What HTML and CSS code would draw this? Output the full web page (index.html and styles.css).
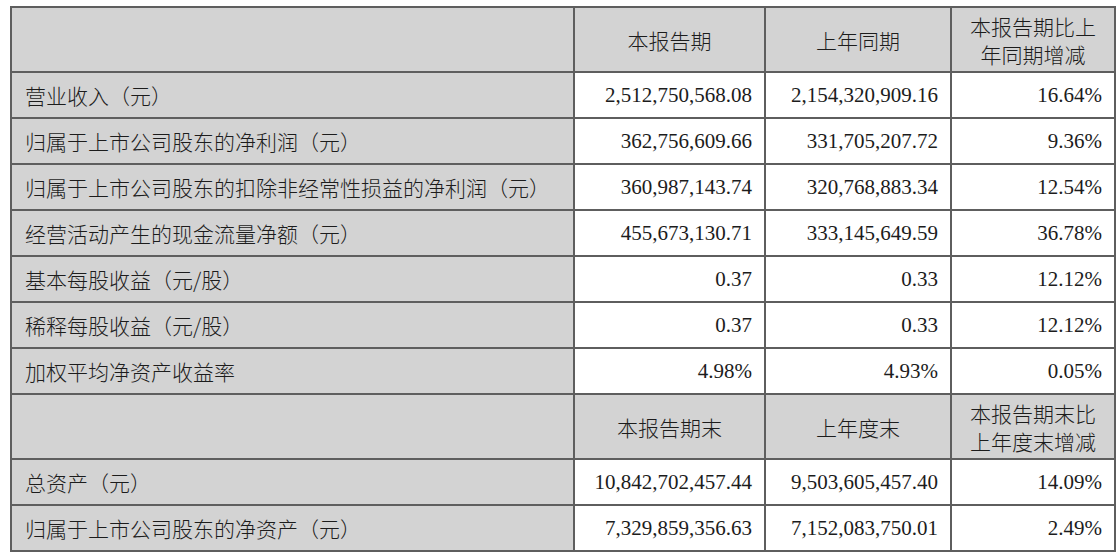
FILE: index.html
```html
<!DOCTYPE html>
<html lang="zh">
<head>
<meta charset="utf-8">
<link rel="stylesheet" href="styles.css">
</head>
<body>
<table class="fin">
  <colgroup>
    <col class="c1"><col class="c2"><col class="c3"><col class="c4">
  </colgroup>
  <tr class="head">
    <td class="label"></td>
    <td>本报告期</td>
    <td>上年同期</td>
    <td>本报告期比上<br>年同期增减</td>
  </tr>
  <tr><td class="label">营业收入（元）</td><td class="num">2,512,750,568.08</td><td class="num">2,154,320,909.16</td><td class="num">16.64%</td></tr>
  <tr><td class="label">归属于上市公司股东的净利润（元）</td><td class="num">362,756,609.66</td><td class="num">331,705,207.72</td><td class="num">9.36%</td></tr>
  <tr><td class="label">归属于上市公司股东的扣除非经常性损益的净利润（元）</td><td class="num">360,987,143.74</td><td class="num">320,768,883.34</td><td class="num">12.54%</td></tr>
  <tr><td class="label">经营活动产生的现金流量净额（元）</td><td class="num">455,673,130.71</td><td class="num">333,145,649.59</td><td class="num">36.78%</td></tr>
  <tr><td class="label">基本每股收益（元/股）</td><td class="num">0.37</td><td class="num">0.33</td><td class="num">12.12%</td></tr>
  <tr><td class="label">稀释每股收益（元/股）</td><td class="num">0.37</td><td class="num">0.33</td><td class="num">12.12%</td></tr>
  <tr><td class="label">加权平均净资产收益率</td><td class="num">4.98%</td><td class="num">4.93%</td><td class="num">0.05%</td></tr>
  <tr class="head">
    <td class="label"></td>
    <td>本报告期末</td>
    <td>上年度末</td>
    <td>本报告期末比<br>上年度末增减</td>
  </tr>
  <tr><td class="label">总资产（元）</td><td class="num">10,842,702,457.44</td><td class="num">9,503,605,457.40</td><td class="num">14.09%</td></tr>
  <tr><td class="label">归属于上市公司股东的净资产（元）</td><td class="num">7,329,859,356.63</td><td class="num">7,152,083,750.01</td><td class="num">2.49%</td></tr>
</table>
</body>
</html>
```
FILE: styles.css
```css
html, body {
  margin: 0;
  padding: 0;
  background: #ffffff;
}
body {
  padding: 6px 0 0 10px;
  font-family: "Liberation Serif", "Noto Sans CJK SC", serif;
  color: #1c1c1c;
}
.fin {
  border-collapse: collapse;
  table-layout: fixed;
  width: 1106px;
  border: 2px solid #1a1a1a;
  font-size: 21px;
}
.c1 { width: 563px; }
.c2 { width: 191px; }
.c3 { width: 186px; }
.c4 { width: 164px; }
.fin td {
  border: 2px solid #5e5e5e;
  height: 44px;
  padding: 0 12px 0 13px;
  line-height: 28px;
  white-space: nowrap;
  background: #ffffff;
}
.fin td.label {
  background: #d3d3d3;
  font-family: "Noto Sans CJK SC", sans-serif;
  font-size: 21px;
  font-weight: 300;
}
.fin tr.head td {
  height: 63px;
  background: #d3d3d3;
  text-align: center;
  font-family: "Noto Sans CJK SC", sans-serif;
  font-size: 21px;
  font-weight: 300;
  padding: 0 4px;
}
.fin td.num {
  text-align: right;
}
```
